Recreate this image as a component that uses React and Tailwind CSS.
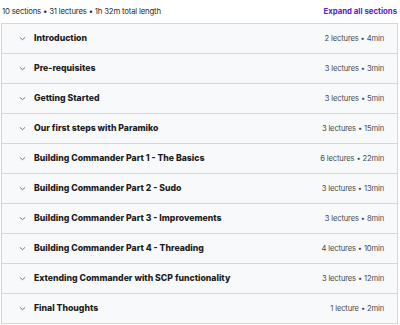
const sections = [
  ["Introduction", "2 lectures • 4min"],
  ["Pre-requisites", "3 lectures • 3min"],
  ["Getting Started", "3 lectures • 5min"],
  ["Our first steps with Paramiko", "3 lectures • 15min"],
  ["Building Commander Part 1 - The Basics", "6 lectures • 22min"],
  ["Building Commander Part 2 - Sudo", "3 lectures • 13min"],
  ["Building Commander Part 3 - Improvements", "3 lectures • 8min"],
  ["Building Commander Part 4 - Threading", "4 lectures • 10min"],
  ["Extending Commander with SCP functionality", "3 lectures • 12min"],
  ["Final Thoughts", "1 lecture • 2min"],
];

function Chevron() {
  return (
    <svg width="7" height="7" viewBox="0 0 12 12" fill="none" stroke="#6a6f73" strokeWidth="1.6" strokeLinecap="round" strokeLinejoin="round">
      <path d="M2 4.5l4 3.5 4-3.5" />
    </svg>
  );
}

export default function App() {
  return (
    <div className="w-[400px] h-[325px] bg-white overflow-hidden font-['Inter',sans-serif] text-[#2d2f31]">
      <div className="flex items-center justify-between h-[23px] pl-[2px] pr-[3px]">
        <span className="text-[7.8px] tracking-[-0.2px] text-[#2d2f31]">10 sections • 31 lectures • 1h 32m total length</span>
        <span className="text-[7.8px] font-bold text-[#5624d0]">Expand all sections</span>
      </div>
      <div className="ml-[1px] mr-[2px] border border-[#d1d7dc] border-b-0">
        {sections.map(([title, meta]) => (
          <div key={title} className="flex items-center h-[30px] bg-[#f7f9fa] border-b border-[#d1d7dc] pl-[17px] pr-[13px]">
            <Chevron />
            <span className="ml-[8px] text-[8.7px] font-extrabold text-[#1c1d1f]">{title}</span>
            <span className="ml-auto text-[7.6px] tracking-[-0.15px] text-[#4a4d50]">{meta}</span>
          </div>
        ))}
      </div>
    </div>
  );
}
